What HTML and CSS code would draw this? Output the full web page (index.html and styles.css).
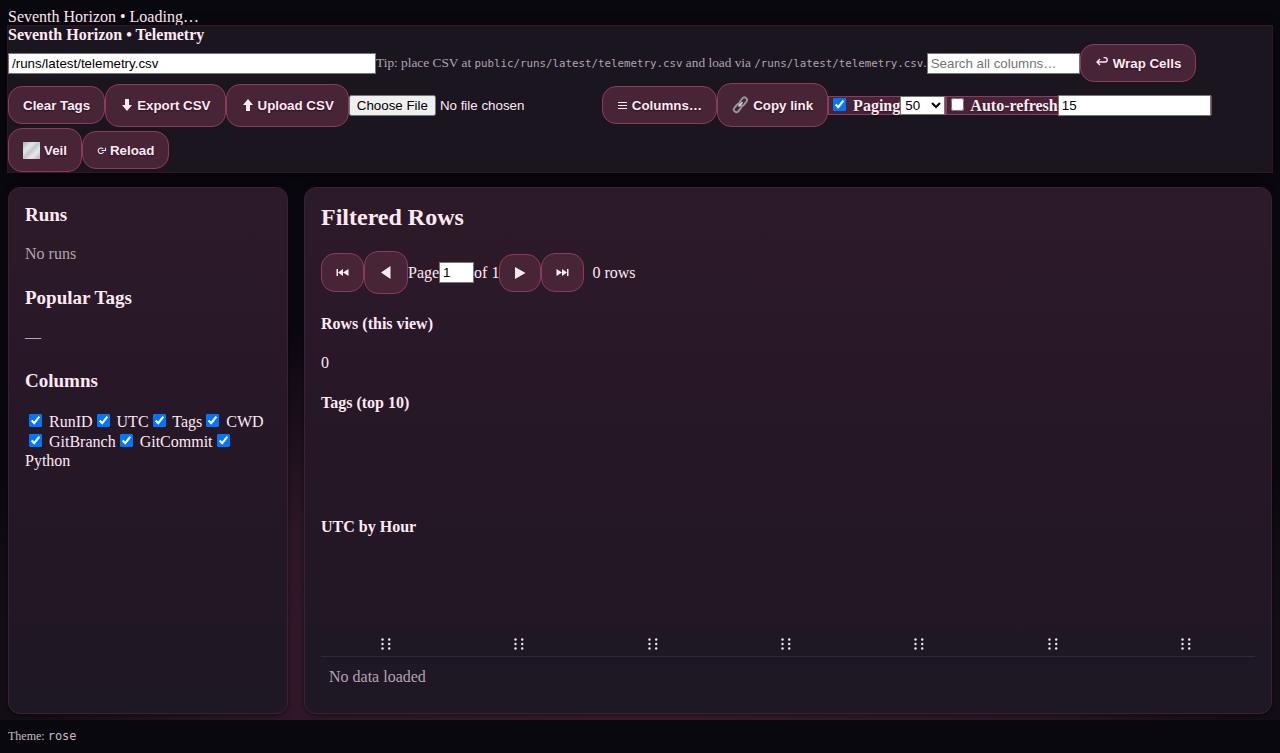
FILE: index.html
```html
<!DOCTYPE html>
<html lang="en">
<head>
<meta charset="utf-8">
<title>Seventh Horizon • Telemetry</title>
<link rel="stylesheet" href="styles.css">
</head>
<body>
<div class="status">Seventh Horizon • Loading…</div>
<header class="header">
  <strong class="brand">Seventh Horizon • Telemetry</strong>
  <div class="toolbar">
    <input class="field path" type="text" aria-label="CSV path" value="/runs/latest/telemetry.csv">
    <span class="tip">Tip: place CSV at <code>public/runs/latest/telemetry.csv</code> and load via <code>/runs/latest/telemetry.csv</code>.</span>
    <input class="field" type="search" aria-label="Search" placeholder="Search all columns…">
    <button class="btn"><svg class="icon" width="14" height="16" viewBox="0 0 14 16"><path d="M5 4 2 7l3 3M2 7h8a2.200 2.200 0 0 0 0-4.400H8.500" fill="none" stroke="currentColor" stroke-width="1.400"/></svg>Wrap Cells</button>
    <button class="btn">Clear Tags</button>
    <button class="btn tall"><svg class="icon" width="13" height="16" viewBox="0 0 13 16"><path d="M5 2h4v6h3l-5 6-5-6h3z" fill="currentColor"/></svg>Export CSV</button>
    <button class="btn tall"><svg class="icon" width="13" height="16" viewBox="0 0 13 16"><path d="M5 14h4V8h3L7 2 2 8h3z" fill="currentColor"/></svg>Upload CSV</button>
    <input class="file" type="file" aria-label="Upload CSV file">
    <button class="btn"><svg class="icon" width="11" height="16" viewBox="0 0 11 16"><path d="M1 5.500h9M1 8.500h9M1 11.500h9" stroke="currentColor" stroke-width="1.200"/></svg>Columns…</button>
    <button class="btn emoji"><svg class="icon" width="17" height="18" viewBox="0 0 17 18"><g fill="none" stroke="#8e9a9f" stroke-width="1.900"><rect x="-4.500" y="-2.600" width="9" height="5.200" rx="2.600" transform="translate(11.200 5.600) rotate(-52)"/><rect x="-4.500" y="-2.600" width="9" height="5.200" rx="2.600" transform="translate(5.600 12) rotate(-52)"/></g><path d="m6.500 10.500 4-4.500" stroke="#d7dddf" stroke-width="1.500"/></svg>Copy link</button>
    <span class="group"><label class="check"><input type="checkbox" checked> Paging</label><select aria-label="Rows per page"><option>50</option><option>100</option></select></span>
    <span class="group"><label class="check"><input type="checkbox"> Auto-refresh</label><input class="field" type="text" aria-label="Refresh seconds" value="15"></span>
    <button class="btn emoji"><svg class="icon" width="17" height="17" viewBox="0 0 17 17"><defs><linearGradient id="fog" x1="0" y1="0" x2="1" y2="1"><stop offset="0" stop-color="#a9afb6"/><stop offset=".3" stop-color="#e4e6e9"/><stop offset=".5" stop-color="#c4c8cd"/><stop offset=".7" stop-color="#e8eaec"/><stop offset="1" stop-color="#b0b5bb"/></linearGradient></defs><path d="M0 0h17v17H0z" fill="url(#fog)"/></svg>Veil</button>
    <button class="btn"><svg class="icon" width="9" height="16" viewBox="0 0 9 16"><path d="M6.200 7A2.800 2.800 0 1 0 6.500 10M4.500 8.500h4V5.800" fill="none" stroke="currentColor" stroke-width="1.100"/></svg>Reload</button>
  </div>
</header>
<main class="layout">
  <aside class="card">
    <h3>Runs</h3>
    <p class="muted">No runs</p>
    <h3>Popular Tags</h3>
    <p class="muted">—</p>
    <h3>Columns</h3>
    <div class="columns"><label><input type="checkbox" checked> RunID</label><label><input type="checkbox" checked> UTC</label><label><input type="checkbox" checked> Tags</label><label><input type="checkbox" checked> CWD</label> <label><input type="checkbox" checked> GitBranch</label><label><input type="checkbox" checked> GitCommit</label><label><input type="checkbox" checked> Python</label></div>
  </aside>
  <section class="card">
    <h2>Filtered Rows</h2>
    <nav class="pager">
      <button class="btn" aria-label="First page"><svg width="13" height="17" viewBox="0 0 13 17"><path d="M.5 5h1.500v7H.5zM7 5v7L2 8.500zM12.500 5v7L7 8.500z" fill="currentColor"/></svg></button>
      <button class="btn tall" aria-label="Previous page"><svg width="14" height="17" viewBox="0 0 14 17"><path d="M11.500 2v13L2 8.500z" fill="currentColor"/></svg></button>
      <label for="page">Page</label><input class="field page" id="page" type="text" value="1"><span>of 1</span>
      <button class="btn" aria-label="Next page"><svg width="12" height="16" viewBox="0 0 12 16"><path d="M1 2v12l10.500-6z" fill="currentColor"/></svg></button>
      <button class="btn" aria-label="Last page"><svg width="13" height="17" viewBox="0 0 13 17"><path d="M12.500 5H11v7h1.500zM6 5v7l5-3.500zM.5 5v7L6 8.500z" fill="currentColor"/></svg></button>
      <span class="count">0 rows</span>
    </nav>
    <h4>Rows (this view)</h4>
    <p class="total">0</p>
    <h4>Tags (top 10)</h4>
    <div class="chart"></div>
    <h4>UTC by Hour</h4>
    <div class="chart hours"></div>
    <table>
      <thead><tr>
        <th><svg class="grip" viewBox="0 0 10 12"><use href="#dots"/></svg></th>
        <th><svg class="grip" viewBox="0 0 10 12"><use href="#dots"/></svg></th>
        <th><svg class="grip" viewBox="0 0 10 12"><use href="#dots"/></svg></th>
        <th><svg class="grip" viewBox="0 0 10 12"><use href="#dots"/></svg></th>
        <th><svg class="grip" viewBox="0 0 10 12"><use href="#dots"/></svg></th>
        <th><svg class="grip" viewBox="0 0 10 12"><use href="#dots"/></svg></th>
        <th><svg class="grip" viewBox="0 0 10 12"><defs><g id="dots" fill="#f2e6f0"><circle cx="1.500" cy="1.500" r="1.200"/><circle cx="8.200" cy="1.500" r="1.200"/><circle cx="1.500" cy="6" r="1.200"/><circle cx="8.200" cy="6" r="1.200"/><circle cx="1.500" cy="10.500" r="1.200"/><circle cx="8.200" cy="10.500" r="1.200"/></g></defs><use href="#dots"/></svg></th>
      </tr></thead>
      <tbody><tr><td colspan="7">No data loaded</td></tr></tbody>
    </table>
  </section>
</main>
<footer class="footer">Theme: <code>rose</code></footer>
</body>
</html>
```
FILE: styles.css
```css
* { box-sizing: border-box; }
body {
  margin: 0;
  min-height: 100vh;
  display: flex;
  flex-direction: column;
  padding-top: 8px;
  font: 16px/18px "Liberation Serif", serif;
  color: #ffe9f3;
  background: radial-gradient(ellipse 58% 50% at 50% 88%, #402033 0%, #2e1727 58%, #150e18 85%, #0a080f 100%) #08080e;
}
h2, h3, h4, p { margin: 0; }
code { font-family: "DejaVu Sans Mono", monospace; }
.status { padding: 0 8px; }
.header {
  margin: 0 8px;
  background: #1b1520;
  box-shadow: 0 0 0 1px #321525, 0 4px 12px #00000080;
}
.brand { display: block; }
.toolbar { display: flex; flex-wrap: wrap; align-items: center; row-gap: 1px; }
.field, .file, select, .btn { font-family: "Liberation Sans", sans-serif; }
.field {
  width: 153px;
  height: 21px;
  padding: 1px 3px;
  border: 1px solid #767676;
  background: #fff;
  color: #000;
}
.path { width: 368px; }
.page { width: 35px; }
.file { width: 253px; }
.tip { font-size: smaller; color: #b5a3b0; }
.tip code { font-size: 81%; }
.btn {
  display: flex;
  align-items: center;
  padding: 10px 14px;
  min-height: 38px;
  border: 1px solid #8b3a62;
  border-radius: 14px;
  background: #482437;
  color: #ffe9f3;
  font-weight: bold;
  line-height: 15px;
  text-shadow: 0 1px 2px #00000080;
}
.tall { min-height: 43px; }
.emoji { min-height: 44px; }
.icon { margin-right: 4px; flex: none; }
.group {
  display: flex;
  align-items: center;
  height: 19px;
  border: 1px solid #8b3a62;
  background: #482437;
  font-weight: bold;
}
.check { text-shadow: 0 1px 2px #00000080; }
input[type="checkbox"] { width: 13px; height: 13px; margin: 3px 3px 3px 4px; accent-color: #0075ff; }
select { width: 45px; height: 19px; background: #fff; color: #000; border: 1px solid #767676; border-radius: 0; }
.layout {
  flex: 1;
  display: grid;
  grid-template-columns: 280px minmax(0, 1fr);
  gap: 16px;
  padding: 15px 8px 6px;
}
.card {
  padding: 16px;
  border: 1px solid #3e2034;
  border-radius: 12px;
  background: linear-gradient(#2d1a29, #251726 55%, #1e1724);
  box-shadow: 0 2px 6px #00000080;
}
h3 { font-size: 19px; line-height: 21px; margin-bottom: 20px; }
.muted { color: #b5a3b0; margin-bottom: 24px; }
.columns { line-height: 19px; }
h2 { font-size: 24px; line-height: 27px; margin-bottom: 20px; }
.pager { display: flex; align-items: center; margin-bottom: 21px; }
.count { margin-left: 8px; }
h4 { font-size: 16px; margin-bottom: 21px; }
.total { margin-bottom: 22px; }
.chart { height: 85px; }
.hours { height: 76px; }
table { width: 100%; border-collapse: collapse; table-layout: fixed; background: #1e1724; }
th { height: 23px; padding: 0 4px 0 0; border-bottom: 1px solid #35253a; }
td { padding: 11px 8px; color: #b5a3b0; }
.grip { display: block; width: 10px; height: 12px; margin: 0 auto; }
.footer { padding: 8px; line-height: 17px; font-size: 12px; color: #c9b9c5; background: #08080e; }
```
